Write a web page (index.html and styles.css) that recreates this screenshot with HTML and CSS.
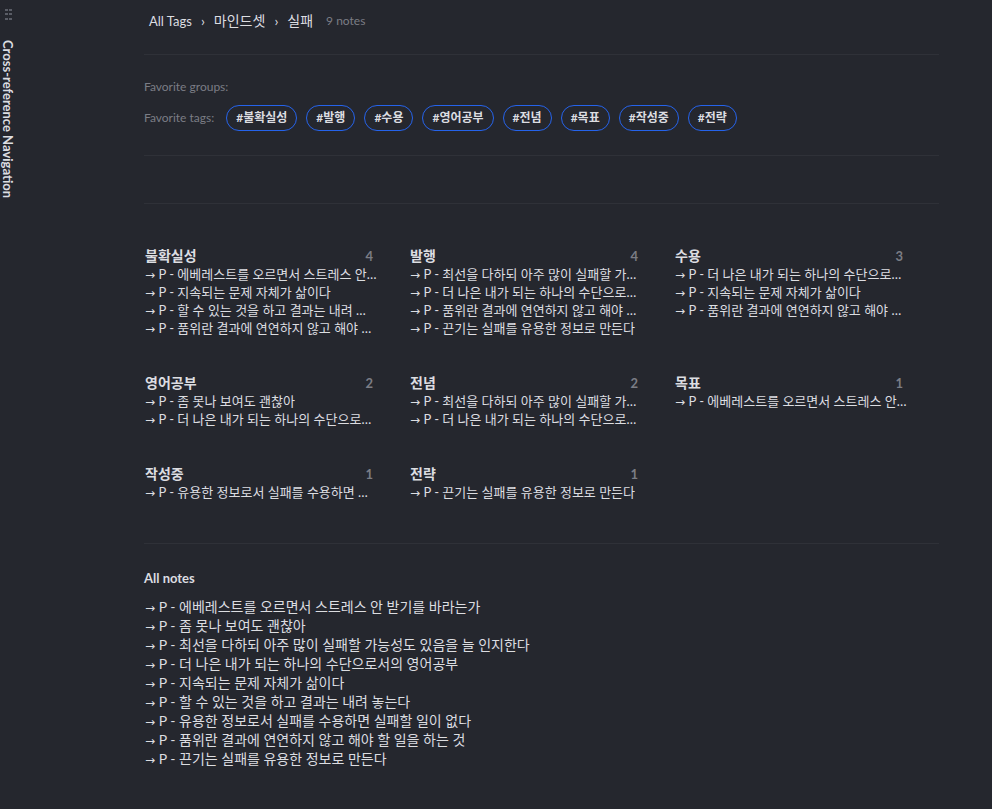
FILE: index.html
```html
<!DOCTYPE html>
<html lang="ko">
<head>
    <meta charset="UTF-8">
    <meta name="viewport" content="width=device-width, initial-scale=1.0">
    <title>Cross-reference Navigation</title>
    <link rel="stylesheet" href="styles.css">
</head>
<body>
    <aside class="sidebar">
        <svg class="grip" width="8" height="12" viewBox="0 0 8 12" fill="#5a5d66">
            <rect x="0" y="0" width="3" height="2"/><rect x="4" y="0" width="3" height="2"/>
            <rect x="0" y="4" width="3" height="2"/><rect x="4" y="4" width="3" height="2"/>
            <rect x="0" y="9" width="3" height="2"/><rect x="4" y="9" width="3" height="2"/>
        </svg>
        <h1 class="sidebar-title">Cross-reference Navigation</h1>
    </aside>

    <main class="content">
        <nav class="breadcrumb">
            <a href="#">All Tags</a>
            <span class="sep">›</span>
            <a href="#">마인드셋</a>
            <span class="sep">›</span>
            <a href="#">실패</a>
            <span class="count-label">9 notes</span>
        </nav>

        <section class="favorites">
            <div class="fav-row">
                <span class="fav-label">Favorite groups:</span>
            </div>
            <div class="fav-row">
                <span class="fav-label">Favorite tags:</span>
                <div class="tags">
                    <button type="button" class="tag">#불확실성</button>
                    <button type="button" class="tag">#발행</button>
                    <button type="button" class="tag">#수용</button>
                    <button type="button" class="tag">#영어공부</button>
                    <button type="button" class="tag">#전념</button>
                    <button type="button" class="tag">#목표</button>
                    <button type="button" class="tag">#작성중</button>
                    <button type="button" class="tag">#전략</button>
                </div>
            </div>
        </section>

        <div class="spacer"></div>

        <section class="groups">
            <div class="group">
                <h2 class="group-title"><a href="#">불확실성</a><span class="count">4</span></h2>
                <ul class="notes">
                    <li><a href="#"><span class="arrow">→</span> P - 에베레스트를 오르면서 스트레스 안 받기를 바라는가</a></li>
                    <li><a href="#"><span class="arrow">→</span> P - 지속되는 문제 자체가 삶이다</a></li>
                    <li><a href="#"><span class="arrow">→</span> P - 할 수 있는 것을 하고 결과는 내려 놓는다</a></li>
                    <li><a href="#"><span class="arrow">→</span> P - 품위란 결과에 연연하지 않고 해야 할 일을 하는 것</a></li>
                </ul>
            </div>
            <div class="group">
                <h2 class="group-title"><a href="#">발행</a><span class="count">4</span></h2>
                <ul class="notes">
                    <li><a href="#"><span class="arrow">→</span> P - 최선을 다하되 아주 많이 실패할 가능성도 있음을 늘 인지한다</a></li>
                    <li><a href="#"><span class="arrow">→</span> P - 더 나은 내가 되는 하나의 수단으로서의 영어공부</a></li>
                    <li><a href="#"><span class="arrow">→</span> P - 품위란 결과에 연연하지 않고 해야 할 일을 하는 것</a></li>
                    <li><a href="#"><span class="arrow">→</span> P - 끈기는 실패를 유용한 정보로 만든다</a></li>
                </ul>
            </div>
            <div class="group">
                <h2 class="group-title"><a href="#">수용</a><span class="count">3</span></h2>
                <ul class="notes">
                    <li><a href="#"><span class="arrow">→</span> P - 더 나은 내가 되는 하나의 수단으로서의 영어공부</a></li>
                    <li><a href="#"><span class="arrow">→</span> P - 지속되는 문제 자체가 삶이다</a></li>
                    <li><a href="#"><span class="arrow">→</span> P - 품위란 결과에 연연하지 않고 해야 할 일을 하는 것</a></li>
                </ul>
            </div>
            <div class="group">
                <h2 class="group-title"><a href="#">영어공부</a><span class="count">2</span></h2>
                <ul class="notes">
                    <li><a href="#"><span class="arrow">→</span> P - 좀 못나 보여도 괜찮아</a></li>
                    <li><a href="#"><span class="arrow">→</span> P - 더 나은 내가 되는 하나의 수단으로서의 영어공부</a></li>
                </ul>
            </div>
            <div class="group">
                <h2 class="group-title"><a href="#">전념</a><span class="count">2</span></h2>
                <ul class="notes">
                    <li><a href="#"><span class="arrow">→</span> P - 최선을 다하되 아주 많이 실패할 가능성도 있음을 늘 인지한다</a></li>
                    <li><a href="#"><span class="arrow">→</span> P - 더 나은 내가 되는 하나의 수단으로서의 영어공부</a></li>
                </ul>
            </div>
            <div class="group">
                <h2 class="group-title"><a href="#">목표</a><span class="count">1</span></h2>
                <ul class="notes">
                    <li><a href="#"><span class="arrow">→</span> P - 에베레스트를 오르면서 스트레스 안 받기를 바라는가</a></li>
                </ul>
            </div>
            <div class="group">
                <h2 class="group-title"><a href="#">작성중</a><span class="count">1</span></h2>
                <ul class="notes">
                    <li><a href="#"><span class="arrow">→</span> P - 유용한 정보로서 실패를 수용하면 실패할 일이 없다</a></li>
                </ul>
            </div>
            <div class="group">
                <h2 class="group-title"><a href="#">전략</a><span class="count">1</span></h2>
                <ul class="notes">
                    <li><a href="#"><span class="arrow">→</span> P - 끈기는 실패를 유용한 정보로 만든다</a></li>
                </ul>
            </div>
        </section>

        <section class="all-notes">
            <h2 class="all-title">All notes</h2>
            <ul class="notes notes-large">
                <li><a href="#"><span class="arrow">→</span> P - 에베레스트를 오르면서 스트레스 안 받기를 바라는가</a></li>
                <li><a href="#"><span class="arrow">→</span> P - 좀 못나 보여도 괜찮아</a></li>
                <li><a href="#"><span class="arrow">→</span> P - 최선을 다하되 아주 많이 실패할 가능성도 있음을 늘 인지한다</a></li>
                <li><a href="#"><span class="arrow">→</span> P - 더 나은 내가 되는 하나의 수단으로서의 영어공부</a></li>
                <li><a href="#"><span class="arrow">→</span> P - 지속되는 문제 자체가 삶이다</a></li>
                <li><a href="#"><span class="arrow">→</span> P - 할 수 있는 것을 하고 결과는 내려 놓는다</a></li>
                <li><a href="#"><span class="arrow">→</span> P - 유용한 정보로서 실패를 수용하면 실패할 일이 없다</a></li>
                <li><a href="#"><span class="arrow">→</span> P - 품위란 결과에 연연하지 않고 해야 할 일을 하는 것</a></li>
                <li><a href="#"><span class="arrow">→</span> P - 끈기는 실패를 유용한 정보로 만든다</a></li>
            </ul>
        </section>
    </main>
</body>
</html>
```
FILE: styles.css
```css
* {
    box-sizing: border-box;
}

body {
    margin: 0;
    min-height: 100vh;
    display: flex;
    background-color: #25272e;
    color: #dcdde1;
    font-family: Lato, "Noto Sans CJK KR", sans-serif;
    font-size: 13px;
}

h1, h2, ul {
    margin: 0;
    padding: 0;
}

a {
    color: inherit;
    text-decoration: none;
}

/* Left strip with the drag handle and vertical title */
.sidebar {
    flex: none;
    width: 16px;
    padding-top: 9px;
}

.grip {
    display: block;
    margin-left: 5px;
}

.sidebar-title {
    margin-top: 19px;
    writing-mode: vertical-rl;
    font-size: 13px;
    line-height: 16px;
    font-weight: 700;
    white-space: nowrap;
}

.content {
    flex: 1;
    min-width: 0;
    padding: 0 53px 0 128px;
}

.breadcrumb {
    display: flex;
    align-items: center;
    height: 55px;
    padding: 0 5px 13px;
    border-bottom: 1px solid #2f3138;
    font-size: 14px;
    line-height: 20px;
}

.breadcrumb > a:first-child {
    font-size: 13px;
}

.sep {
    margin: 0 9px;
}

.count-label {
    margin-left: 13px;
    color: #7b7d85;
    font-size: 12px;
}

.favorites {
    padding: 22px 0 24px;
    border-bottom: 1px solid #2f3138;
}

.fav-row {
    display: flex;
    align-items: center;
    gap: 12px;
}

.fav-row + .fav-row {
    margin-top: 8px;
}

.fav-label {
    color: #7b7d85;
    font-size: 12px;
    line-height: 20px;
}

.tags {
    display: flex;
    flex-wrap: wrap;
    gap: 9px;
}

.tag {
    height: 26px;
    padding: 0 9px;
    border: 1px solid #2563eb;
    border-radius: 13px;
    background: none;
    color: #dcdde1;
    font-family: inherit;
    font-size: 12px;
    font-weight: 700;
    line-height: 16px;
    cursor: pointer;
}

.spacer {
    height: 48px;
    border-bottom: 1px solid #2f3138;
}

.groups {
    display: grid;
    grid-template-columns: repeat(3, 1fr);
    row-gap: 37px;
    padding: 43px 0 42px;
    border-bottom: 1px solid #2f3138;
}

.group {
    min-width: 0;
    padding: 0 36px 0 1px;
}

.group-title {
    display: flex;
    justify-content: space-between;
    font-size: 14px;
    font-weight: 700;
    line-height: 18px;
}

.count {
    color: #7b7d85;
    font-size: 13px;
}

.notes {
    list-style: none;
    font-size: 13px;
    line-height: 18px;
}

/* Note titles may run slightly past the count before they are cut */
.group .notes {
    margin-right: -4px;
}

.notes li {
    overflow: hidden;
    text-overflow: ellipsis;
    white-space: nowrap;
}

.notes-large {
    padding-left: 1px;
    font-size: 14px;
    line-height: 19px;
}

.arrow {
    font-family: "DejaVu Sans", sans-serif;
    font-size: 12px;
    line-height: 1;
}

.all-notes {
    padding: 24px 0 38px;
}

.all-title {
    margin-bottom: 9px;
    font-size: 13px;
    font-weight: 700;
    line-height: 20px;
}
```
